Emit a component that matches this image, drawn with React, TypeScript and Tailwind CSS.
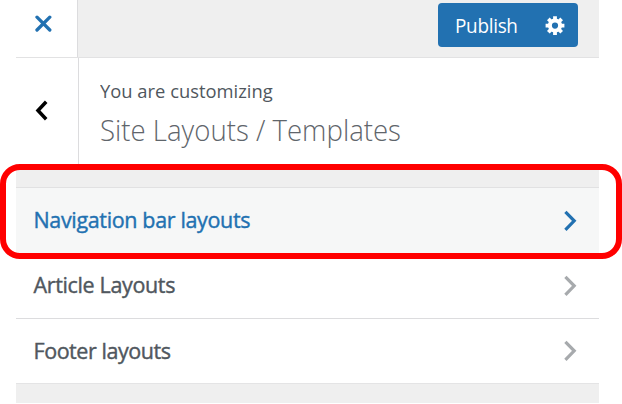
import React from "react";

type RowProps = { label: string; textClass: string; active?: boolean; className: string };

function Chevron({ active }: { active?: boolean }) {
  return (
    <svg
      width="13"
      height="22"
      viewBox="0 0 13 22"
      fill="none"
      stroke={active ? "#2271b1" : "#a7aaad"}
      strokeWidth="3.2"
    >
      <path d="M1.4 1.8 L10.2 10.8 L1.4 19.8" />
    </svg>
  );
}

function Row({ label, textClass, active, className }: RowProps) {
  return (
    <li
      className={`flex items-center justify-between pl-[18px] pr-[22px] ${
        active ? "bg-[#f6f7f7] text-[#2271b1]" : "bg-white text-[#50575e]"
      } ${className}`}
    >
      <span
        className={`origin-left whitespace-nowrap pb-[1px] text-[21.5px] leading-[30px] [-webkit-text-stroke:0.4px_currentColor] ${textClass}`}
      >
        {label}
      </span>
      <Chevron active={active} />
    </li>
  );
}

export default function App() {
  return (
    <div className="relative h-[404px] w-[622px] overflow-hidden bg-white pl-[15.5px] font-['Open_Sans','Noto_Sans',sans-serif]">
      <div className="w-[583.5px]">
        <header className="flex h-[58px] border-b border-[#e2e2e3] bg-[#efefef]">
          <button className="flex w-[62.5px] items-start border-r border-[#dcdcde] bg-white pl-[18px] pt-[15px]">
            <svg width="18" height="18" viewBox="0 0 18 18" stroke="#2271b1" strokeWidth="3.3" strokeLinecap="round">
              <path d="M3 2.2 L15.8 15 M15.8 2.2 L3 15" />
            </svg>
          </button>
          <div className="flex flex-1 justify-end pr-[21.5px] pt-[2.5px]">
            <div className="flex h-[44.5px] w-[139.5px] items-center rounded-[4px] bg-[#2271b1] pl-[16.5px] text-white">
              <span className="w-[90px] origin-left scale-x-[0.97] whitespace-nowrap pt-[3px] text-[19.5px] leading-[26px] tracking-[-0.3px]">
                Publish
              </span>
              <svg width="20" height="20" viewBox="0 0 20 20" fill="none" stroke="white">
                <circle cx="10" cy="10.6" r="5.1" strokeWidth="4" />
                <path
                  strokeWidth="3.8"
                  d="M10 1.2V4.6M10 16.6V20M.6 10.6H4M16 10.6h3.4M3.35 3.95l2.3 2.3M14.35 14.95l2.3 2.3M16.65 3.95l-2.3 2.3M5.65 14.95l-2.3 2.3"
                />
              </svg>
            </div>
          </div>
        </header>

        <section className="flex h-[106px] bg-white">
          <button className="flex w-[63.5px] items-start border-r border-[#dcdcde] pl-[19px] pt-[42px]">
            <svg width="13" height="21" viewBox="0 0 13 21" fill="none" stroke="#000" strokeWidth="3.5">
              <path d="M11.2 1.8 L3 10.5 L11.2 19.2" />
            </svg>
          </button>
          <div className="pl-[21px] pt-[20px] text-[#50575e]">
            <p className="origin-left scale-x-[0.967] whitespace-nowrap text-[19px] leading-[26px]">You are customizing</p>
            <h1 className="origin-left scale-x-[0.935] whitespace-nowrap pt-[5px] text-[29.5px] leading-[42px] font-light text-[#5f656b]">
              Site Layouts / Templates
            </h1>
          </div>
        </section>

        <div className="h-[24px] border-b border-[#e1e1e2] bg-[#efefef]" />
        <ul>
          <Row label="Navigation bar layouts" textClass="tracking-[-0.35px]" active className="h-[65px]" />
          <Row label="Article Layouts" textClass="tracking-[-0.35px]" className="h-[66px] border-b border-[#dcdcde]" />
          <Row label="Footer layouts" textClass="tracking-[-0.45px]" className="h-[65px] border-b border-[#e4e4e5]" />
        </ul>
        <div className="h-[19px] bg-[#efefef]" />
      </div>

      <div className="pointer-events-none absolute left-0 top-[164px] h-[95px] w-[622px] rounded-[20px] border-[6px] border-[#ff0000]" />
    </div>
  );
}
